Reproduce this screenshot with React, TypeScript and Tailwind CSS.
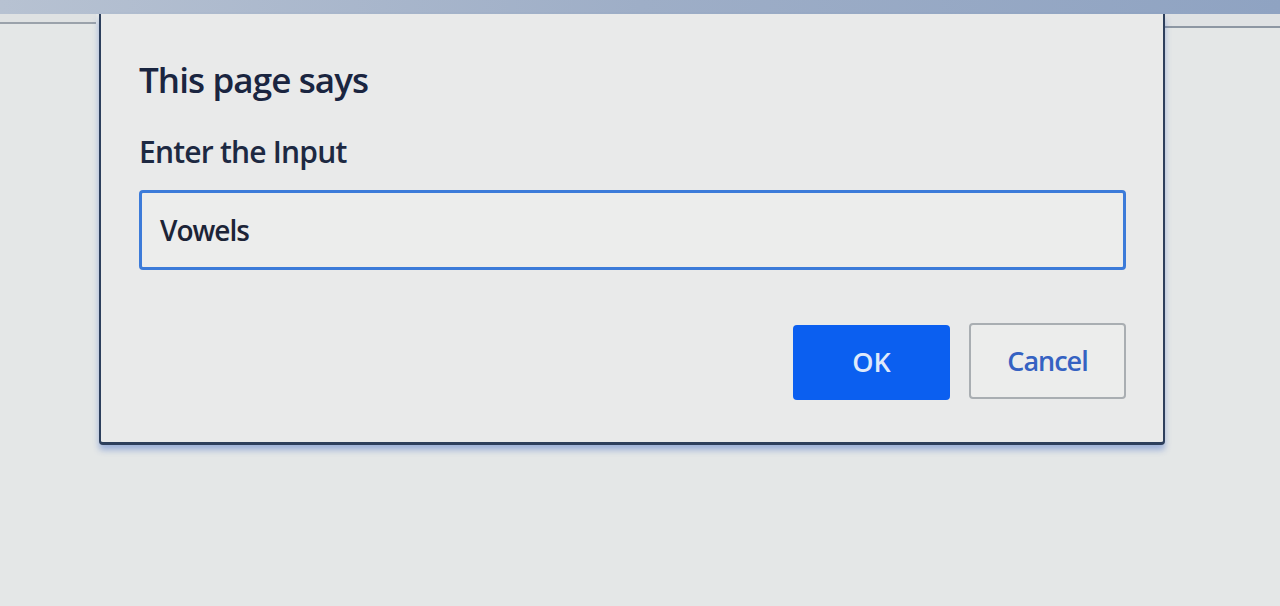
export default function App() {
  return (
    <div
      className="relative h-[606px] w-[1280px] overflow-hidden bg-[#e4e7e7]"
      style={{ fontFamily: '"Open Sans", "Noto Sans", sans-serif' }}
    >
      {/* page behind the prompt */}
      <div className="h-[14px] bg-gradient-to-r from-[#b7c2d2] via-[#9eaec7] to-[#8fa3c2]" />
      <div className="flex">
        <div className="w-[96px]">
          <div className="h-[8px] bg-[#dfe2e3]" />
          <div className="h-[2px] bg-[#9aa2ab]" />
        </div>
        <div className="flex-1" />
        <div className="w-[118px]">
          <div className="h-[12px] bg-[#dfe2e4]" />
          <div className="h-[2px] bg-[#8d97a3]" />
        </div>
      </div>

      {/* prompt dialog */}
      <div className="absolute left-[99px] top-[14px] h-[431px] w-[1066px] rounded-b-[4px] border-x-2 border-b-[3px] border-[#2d3f5c] bg-[#e9eaea] pl-[38px] pr-[37px] pt-[44px] shadow-[0_5px_6px_rgba(70,110,200,0.45)]">
        <div className="text-[35px] font-semibold leading-[44px] tracking-[-0.9px] text-[#1a2540]">This page says</div>
        <div className="mt-[31px] text-[30px] font-semibold leading-[38px] tracking-[-0.8px] text-[#1d2942]">Enter the Input</div>
        <div className="mt-[19px] flex h-[80px] items-center rounded-[4px] border-[3px] border-[#3c7bd9] bg-[#ecedec] px-[18px] text-[28px] font-semibold tracking-[-1px] text-[#1c2437]">
          Vowels
        </div>
        <div className="mt-[55px] flex justify-end gap-[19px]">
          <button
            type="button"
            className="h-[75px] w-[157px] rounded-[4px] bg-[#0b5ff0] text-[27px] font-semibold text-[#dfe9fb]"
          >
            OK
          </button>
          <button
            type="button"
            className="-mt-[2px] h-[76px] w-[157px] rounded-[4px] border-2 border-[#a9aeb2] bg-[#ecedec] text-[27px] font-semibold tracking-[-1px] text-[#3562c2]"
          >
            Cancel
          </button>
        </div>
      </div>
    </div>
  );
}
